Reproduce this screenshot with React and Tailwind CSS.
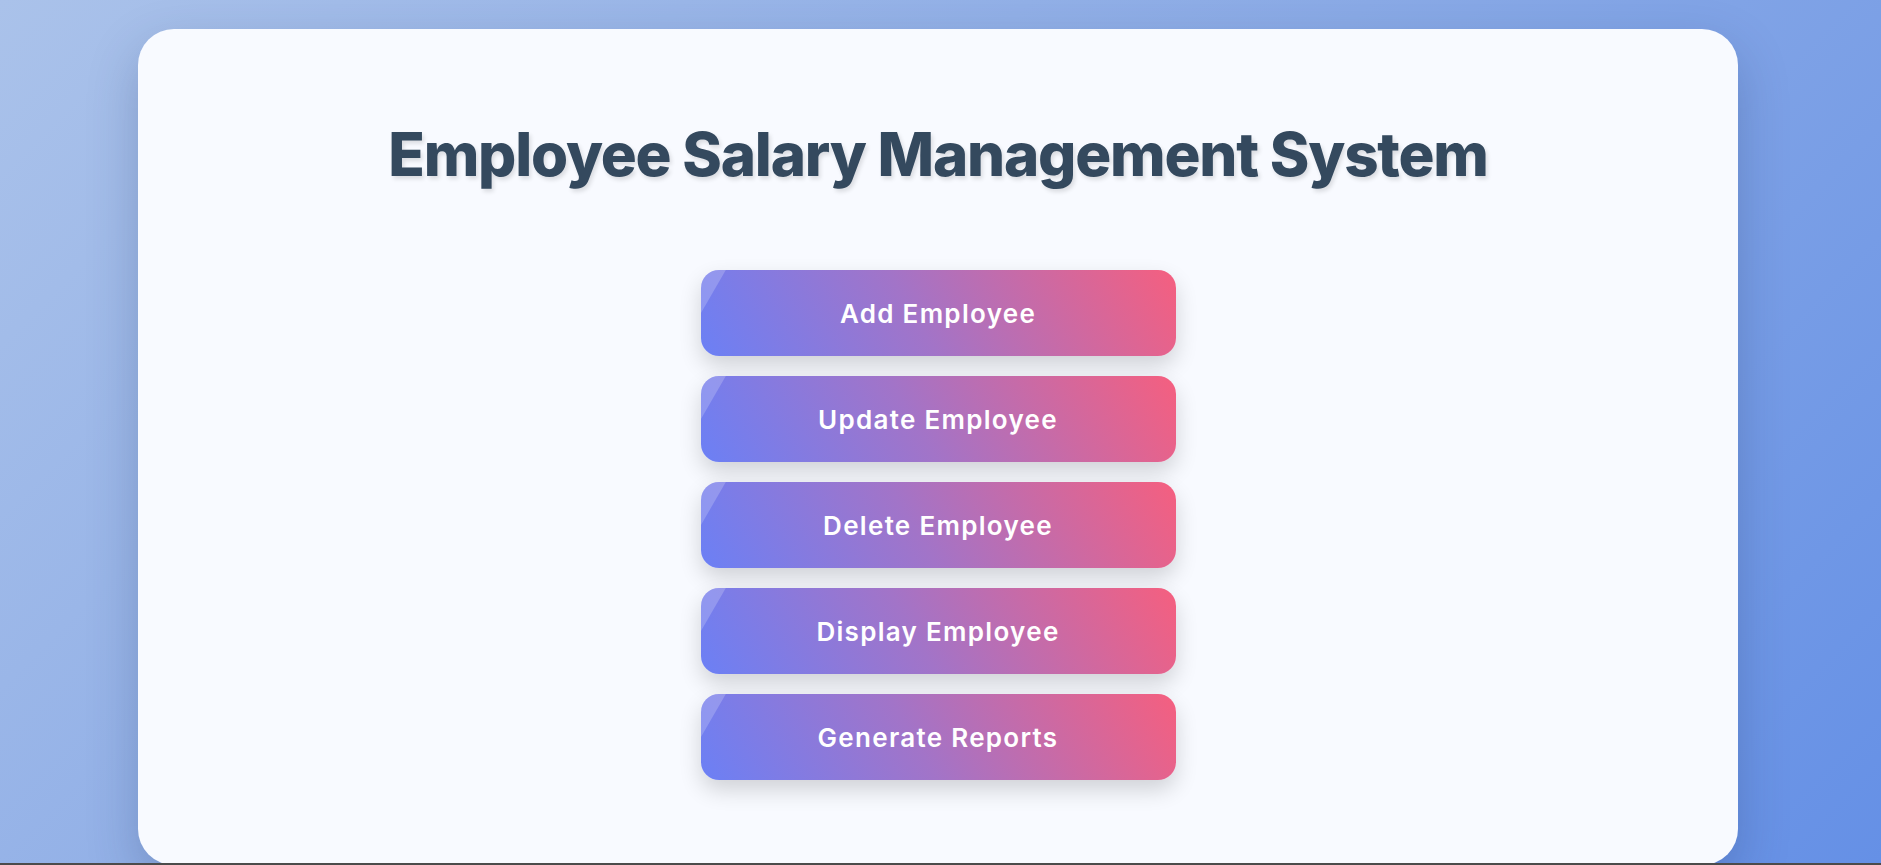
import React from "react";

const items = ["Add Employee", "Update Employee", "Delete Employee", "Display Employee", "Generate Reports"];

export default function App() {
  return (
    <div className="h-[865px] w-full overflow-hidden border-b-2 border-[#4b4b4b] bg-[linear-gradient(135deg,#aac2ea_0%,#8aaae6_50%,#6590e6_100%)] pt-[29px]" style={{ fontFamily: "Inter, 'Noto Sans', sans-serif" }}>
      <div className="ml-[138px] flex h-[836px] w-[1600px] flex-col items-center rounded-[36px] bg-[#f8faff] pt-[95px] shadow-[0_20px_50px_rgba(30,50,100,0.25)]">
        <h1 className="text-[60px] font-extrabold leading-none tracking-[-1.2px] text-[#34495e] [text-shadow:2px_3px_4px_rgba(0,0,0,0.12)]">
          Employee Salary Management System
        </h1>
        <div className="mt-[86px] flex flex-col gap-[20px]">
          {items.map((t) => (
            <button
              key={t}
              className="relative flex h-[86px] w-[475px] items-center justify-center overflow-hidden rounded-[18px] bg-[linear-gradient(60deg,#6b80f5_0%,#a274c8_45%,#f55f7f_100%)] text-[26px] font-semibold tracking-[1.3px] text-white shadow-[0_10px_22px_rgba(0,0,0,0.16)]"
            >
              <span className="absolute left-[-100%] top-0 h-full w-full -skew-x-[30deg] bg-white/20" />
              <span className="relative">{t}</span>
            </button>
          ))}
        </div>
      </div>
    </div>
  );
}
